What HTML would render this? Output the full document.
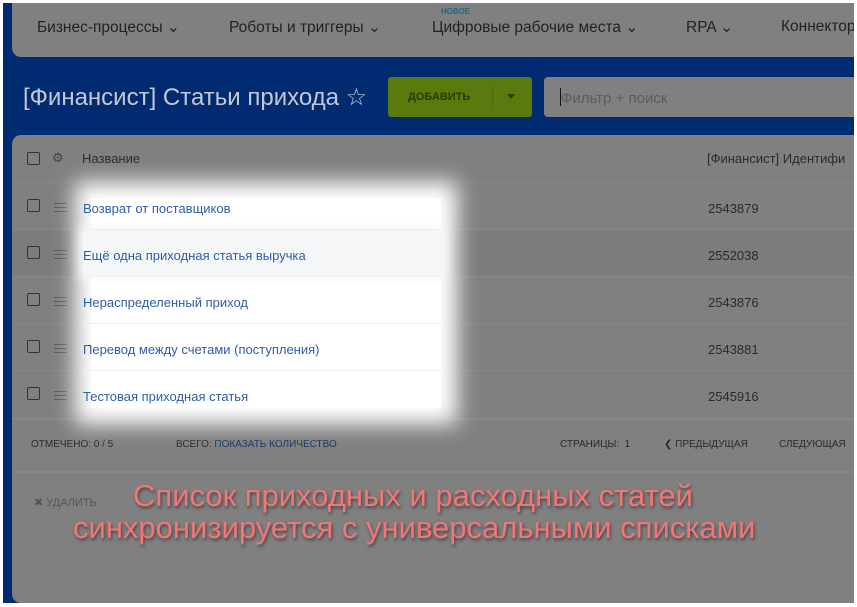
<!DOCTYPE html>
<html><head><meta charset="utf-8"><style>
*{margin:0;padding:0;box-sizing:border-box}
body{width:857px;height:607px;background:#fff;position:relative;overflow:hidden;font-family:"Liberation Sans","DejaVu Sans",sans-serif}
.frame{position:absolute;left:3px;top:3px;width:851px;height:600px;background:#002b70;overflow:hidden}
.nav{position:absolute;left:9px;top:0;right:0;height:54px;background:#808080;border-bottom-left-radius:9px;color:#222;font-size:15.5px}
.nav span{position:absolute;top:15px;white-space:nowrap}
.nav .new{position:absolute;left:429px;top:4px;font-size:8px;color:#1d6a8a;font-weight:bold}
.title{position:absolute;left:20px;top:80px;font-size:24px;color:#c3c9d4;white-space:nowrap}
.add{position:absolute;left:385px;top:74px;width:144px;height:40px;background:#5b7a0e;border-radius:3px;color:#2d3a0a;font-size:11px;font-weight:bold}
.add .t{position:absolute;left:20px;top:14px}
.add .s{position:absolute;left:104px;top:10px;width:1px;height:20px;background:#4e6a0c}
.add .a{position:absolute;left:119px;top:17px;border:4px solid transparent;border-top:5px solid #2d3a0a}
.filt{position:absolute;left:541px;top:74px;right:0;height:40px;background:#808080;border-radius:4px 0 0 4px;color:#5c5c5c;font-size:15px;padding:13px 0 0 17px}
.filt:before{content:"";position:absolute;left:16px;top:11px;width:1px;height:18px;background:#111}
.panel{position:absolute;left:9px;top:132px;right:0;bottom:0;background:#808080;border-radius:9px 0 0 9px}
.line{position:absolute;left:0;right:0;height:1px;background:#888}
.cb{position:absolute;width:13px;height:13px;border:1.5px solid #333;border-radius:2px}
.txt{position:absolute;white-space:nowrap;font-size:13px;color:#2a2a2a}
.ham{position:absolute;width:13px;height:9px;border-top:1.5px solid #555;border-bottom:1.5px solid #555}
.ham:after{content:"";position:absolute;left:0;right:0;top:2.5px;height:1.5px;background:#555}
.spot{position:absolute;left:88px;top:195px;width:350px;height:210px;background:#fff;box-shadow:0 0 20px 16px #fff}
.small{font-size:10px;color:#2a2a2a}
.ann{position:absolute;color:#f47575;font-size:31px;white-space:nowrap;text-align:center;line-height:32px;text-shadow:1px 2px 3px rgba(0,0,0,.5)}
</style></head><body>
<div class="frame">
  <div class="nav">
    <span style="left:25px">Бизнес-процессы ⌄</span>
    <span style="left:217px">Роботы и триггеры ⌄</span>
    <div class="new">НОВОЕ</div>
    <span style="left:420px">Цифровые рабочие места ⌄</span>
    <span style="left:674px">RPA ⌄</span>
    <span style="left:769px">Коннектор</span>
  </div>
  <div class="title">[Финансист] Статьи прихода ☆</div>
  <div class="add"><span class="t">ДОБАВИТЬ</span><span class="s"></span><span class="a"></span></div>
  <div class="filt">Фильтр + поиск</div>
  <div class="panel">
    <div class="cb" style="left:15px;top:17px"></div>
    <div class="txt" style="left:40px;top:15px;color:#444">⚙</div>
    <div class="txt" style="left:70px;top:16px">Название</div>
    <div class="txt" style="left:695px;top:16px">[Финансист] Идентифи</div>
    <div class="line" style="top:47px"></div>
    <div style="position:absolute;left:0;right:0;top:95px;height:47px;background:#7b7c7d"></div>
    <div class="line" style="top:94px"></div>
    <div class="line" style="top:141px"></div>
    <div class="line" style="top:188px"></div>
    <div class="line" style="top:235px"></div>
    <div class="line" style="top:283px;height:2px"></div>
    <div class="cb" style="left:15px;top:64px"></div>
    <div class="cb" style="left:15px;top:111px"></div>
    <div class="cb" style="left:15px;top:158px"></div>
    <div class="cb" style="left:15px;top:205px"></div>
    <div class="cb" style="left:15px;top:252px"></div>
    <div class="ham" style="left:42px;top:68px"></div>
    <div class="ham" style="left:42px;top:115px"></div>
    <div class="ham" style="left:42px;top:162px"></div>
    <div class="ham" style="left:42px;top:209px"></div>
    <div class="ham" style="left:42px;top:256px"></div>
    <div class="txt" style="left:696px;top:66px">2543879</div>
    <div class="txt" style="left:696px;top:113px">2552038</div>
    <div class="txt" style="left:696px;top:160px">2543876</div>
    <div class="txt" style="left:696px;top:207px">2543881</div>
    <div class="txt" style="left:696px;top:254px">2545916</div>
    <div class="txt small" style="left:19px;top:304px">ОТМЕЧЕНО: 0 / 5</div>
    <div class="txt small" style="left:164px;top:304px">ВСЕГО: <span style="color:#1a3560">ПОКАЗАТЬ КОЛИЧЕСТВО</span></div>
    <div class="txt small" style="left:548px;top:304px">СТРАНИЦЫ: &nbsp;1</div>
    <div class="txt small" style="left:652px;top:304px">❮ ПРЕДЫДУЩАЯ</div>
    <div class="txt small" style="left:767px;top:304px">СЛЕДУЮЩАЯ</div>
    <div class="line" style="top:336px;height:2px"></div>
    <div class="txt small" style="left:22px;top:361px;color:#555;font-size:11px">✖ УДАЛИТЬ</div>
  </div>
  <div class="spot"></div>
  <div style="position:absolute;left:80px;top:227px;width:358px;height:46px;background:#f5f6f8;box-shadow:0 0 10px 3px #f5f6f8"></div>
  <div class="line" style="left:80px;width:358px;top:226px;background:#eceef0"></div>
  <div class="line" style="left:80px;width:358px;top:273px;background:#eceef0"></div>
  <div class="line" style="left:80px;width:358px;top:320px;background:#eceef0"></div>
  <div class="line" style="left:80px;width:358px;top:367px;background:#eceef0"></div>
  <div class="txt" style="left:80px;top:198px;color:#2f5da8">Возврат от поставщиков</div>
  <div class="txt" style="left:80px;top:245px;color:#2f5da8">Ещё одна приходная статья выручка</div>
  <div class="txt" style="left:80px;top:292px;color:#2f5da8">Нераспределенный приход</div>
  <div class="txt" style="left:80px;top:339px;color:#2f5da8">Перевод между счетами (поступления)</div>
  <div class="txt" style="left:80px;top:386px;color:#2f5da8">Тестовая приходная статья</div>
  <div class="ann" style="left:70px;top:477px;width:680px">Список приходных и расходных статей<br>синхронизируется с универсальными списками</div>
</div>
</body></html>
